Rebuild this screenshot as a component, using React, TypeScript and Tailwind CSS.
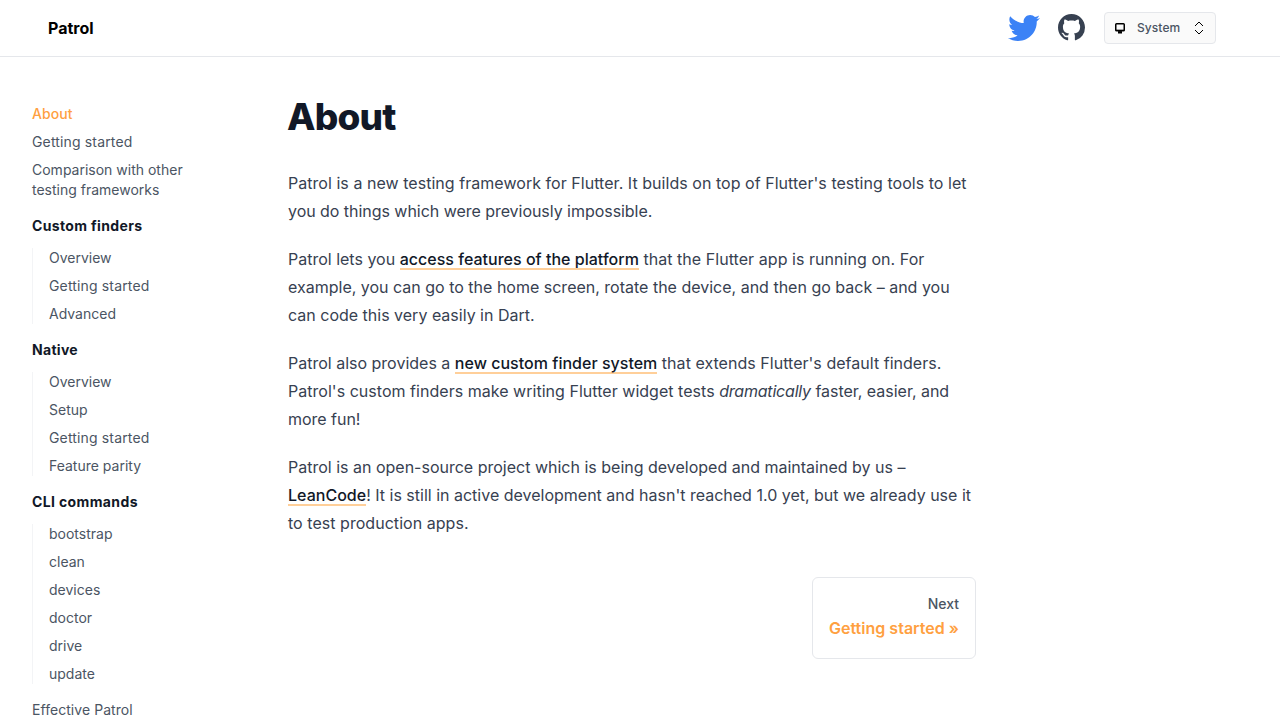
import React from "react";
import { FaTwitter } from "react-icons/fa";

type Section = { title: string; tracking: string; items: string[] };

const topLinks = ["Getting started", "Comparison with other testing frameworks"];

const sections: Section[] = [
  { title: "Custom finders", tracking: "tracking-[0.35px]", items: ["Overview", "Getting started", "Advanced"] },
  { title: "Native", tracking: "tracking-[0.3px]", items: ["Overview", "Setup", "Getting started", "Feature parity"] },
  { title: "CLI commands", tracking: "tracking-[0.37px]", items: ["bootstrap", "clean", "devices", "doctor", "drive", "update"] },
];

function itemTracking(label: string) {
  return label === "Getting started" ? "tracking-[0.15px]" : "";
}

function ContentLink({ children }: { children: React.ReactNode }) {
  return (
    <a href="#" className="font-medium tracking-[0.02px] text-[#111827] shadow-[inset_0_-1px_0_#ffcf99,0_1px_0_#ffcf99]">
      {children}
    </a>
  );
}

function Header() {
  return (
    <header className="flex h-[57px] shrink-0 items-center justify-between border-b border-gray-200 pr-16 pl-12">
      <a href="#" className="text-base font-bold text-black">Patrol</a>
      <div className="flex items-center">
        <FaTwitter className="size-8 text-[#3b82f6]" />
        <svg viewBox="0 0 16 16" className="mb-px ml-[18px] size-[27px] text-[#374151]" fill="currentColor">
          <path d="M8 0C3.58 0 0 3.58 0 8c0 3.54 2.29 6.53 5.47 7.59.4.07.55-.17.55-.38 0-.19-.01-.82-.01-1.49-2.01.37-2.53-.49-2.69-.94-.09-.23-.48-.94-.82-1.13-.28-.15-.68-.52-.01-.53.63-.01 1.08.58 1.23.82.72 1.21 1.87.87 2.33.66.07-.52.28-.87.51-1.07-1.78-.2-3.64-.89-3.64-3.95 0-.87.31-1.59.82-2.15-.08-.2-.36-1.02.08-2.12 0 0 .67-.21 2.2.82.64-.18 1.32-.27 2-.27s1.36.09 2 .27c1.53-1.04 2.2-.82 2.2-.82.44 1.1.16 1.92.08 2.12.51.56.82 1.27.82 2.15 0 3.07-1.87 3.75-3.65 3.95.29.25.54.73.54 1.48 0 1.07-.01 1.93-.01 2.2 0 .21.15.46.55.38A8.01 8.01 0 0 0 16 8c0-4.42-3.58-8-8-8z" />
        </svg>
        <button className="ml-[19px] flex h-8 w-28 items-center rounded border border-[#e5e7eb] bg-[#fafafa] px-[9px] text-xs font-medium text-[#4b5563]">
          <svg viewBox="0 0 12 12" className="size-3 text-black" fill="none" stroke="currentColor">
            <rect x="1.75" y="1.75" width="8.5" height="6.75" rx="0.8" strokeWidth="1.5" />
            <path d="M1.5 8.6h9" strokeWidth="1.4" />
            <path d="M4 10.3h4" strokeWidth="2.4" />
          </svg>
          <span className="ml-[11px] tracking-[0.08px]">System</span>
          <svg viewBox="0 0 10 14" className="mr-0.5 ml-auto h-3.5 w-2.5 text-black" fill="none" stroke="currentColor">
            <path d="M1 5l4-4 4 4M1 9l4 4 4-4" />
          </svg>
        </button>
      </div>
    </header>
  );
}

function Sidebar() {
  return (
    <nav className="w-56 shrink-0 pt-[47px] pl-8 text-sm leading-5 text-[#4b5563]">
      <a href="#" className="block w-44 font-medium tracking-[0.05px] text-[#ffa040]">About</a>
      {topLinks.map((label) => (
        <a key={label} href="#" className={`mt-2 block w-44 ${itemTracking(label)}`}>{label}</a>
      ))}
      {sections.map((section) => (
        <section key={section.title} className="mt-4">
          <h2 className={`font-bold text-[#111827] ${section.tracking}`}>{section.title}</h2>
          <div className="mt-3 flex flex-col gap-2 border-l border-gray-100 pl-4">
            {section.items.map((item) => (
              <a key={item} href="#" className={itemTracking(item)}>{item}</a>
            ))}
          </div>
        </section>
      ))}
      <a href="#" className="mt-4 block tracking-[0.05px]">Effective Patrol</a>
    </nav>
  );
}

export default function App() {
  return (
    <div className="flex h-screen flex-col overflow-hidden bg-white font-[Inter,sans-serif]">
      <Header />
      <div className="flex">
        <Sidebar />
        <main className="ml-16 w-[688px] pt-10">
          <h1 className="-ml-px text-[37px] leading-10 font-extrabold tracking-[-0.8px] text-[#111827]">About</h1>
          <div className="mt-8 flex flex-col gap-5 text-base leading-7 text-[#374151]">
            <p><span className="tracking-[0.04px]">Patrol is a new testing framework for Flutter. It builds on top of Flutter's testing tools to let</span> <span className="tracking-[-0.04px]">you do things which were previously impossible.</span></p>
            <p>Patrol lets you <ContentLink>access features of the platform</ContentLink> <span className="tracking-[0.05px]">that the Flutter app is running on. For</span> example, you can go to the home screen, rotate the device, and then go back – and you can code this very easily in Dart.</p>
            <p>Patrol also provides a <ContentLink>new custom finder system</ContentLink> <span className="tracking-[0.03px]">that extends Flutter's default finders. Patrol's custom finders make writing Flutter widget tests</span> <em className="tracking-[-0.2px]">dramatically</em> <span className="tracking-[-0.02px]">faster, easier, and more fun!</span></p>
            <p>Patrol is an open-source project which is being developed and maintained by us – <ContentLink>LeanCode</ContentLink>! It is still in active development and hasn't reached 1.0 yet, but we already use it <span className="tracking-[0.04px]">to test production apps.</span></p>
          </div>
          <div className="mt-10 flex justify-end">
            <a href="#" className="flex h-[82px] w-[164px] flex-col items-end rounded-md border border-gray-200 px-4 pt-4 font-medium">
              <span className="text-sm leading-5 text-[#4b5563]">Next</span>
              <span className="mt-0.5 text-base leading-6 font-semibold tracking-[0.02px] whitespace-nowrap text-[#ffa040]">Getting started »</span>
            </a>
          </div>
        </main>
      </div>
    </div>
  );
}
